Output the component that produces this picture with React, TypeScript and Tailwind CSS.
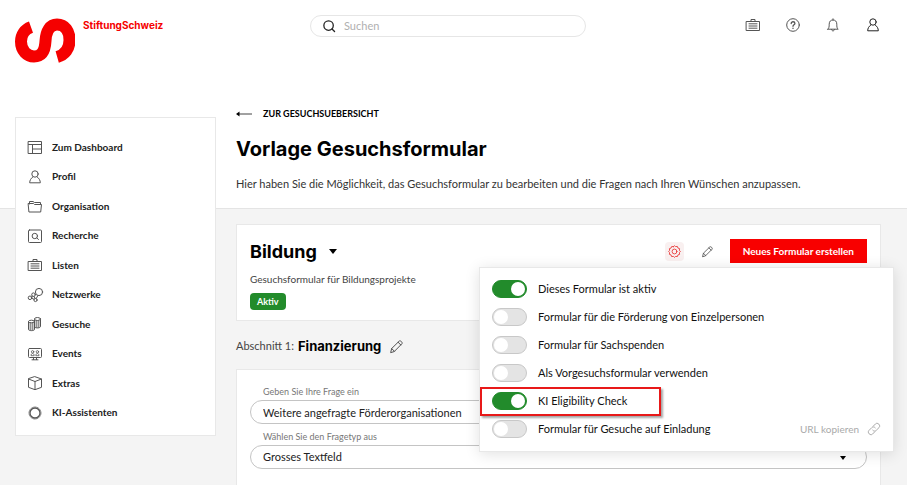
import {useState} from "react";
import type {ReactNode} from "react";

type SettingKey = "active" | "individuals" | "inKind" | "preliminary" | "eligibility" | "invitation";

const SETTINGS: {key: SettingKey; label: string}[] = [
    {key: "active", label: "Dieses Formular ist aktiv"},
    {key: "individuals", label: "Formular für die Förderung von Einzelpersonen"},
    {key: "inKind", label: "Formular für Sachspenden"},
    {key: "preliminary", label: "Als Vorgesuchsformular verwenden"},
    {key: "eligibility", label: "KI Eligibility Check"},
    {key: "invitation", label: "Formular für Gesuche auf Einladung"},
];

function Icon({children, className = "h-[14px] w-[14px]"}: {children: ReactNode; className?: string}) {
    return (
        <svg
            viewBox="0 0 14 14"
            fill="none"
            stroke="currentColor"
            strokeWidth="1"
            strokeLinecap="round"
            strokeLinejoin="round"
            className={`shrink-0 overflow-visible ${className}`}
            aria-hidden="true"
        >
            {children}
        </svg>
    );
}

const dashboardShape = <path d="M.5 1.500h13v12H.5zM.5 4.500h13M4.500 4.500v9M4.500 9h9"/>;
const personShape = (
    <>
        <circle cx="7" cy="4" r="3.200"/>
        <path d="M4.600 7.200C2.800 8.400 1.700 10.400 1.700 12.800h10.600c0-2.400-1.100-4.400-2.900-5.600"/>
    </>
);
const folderShape = <path d="M1.500 5V2.500h3.500l1.500 1h6v1.500M.5 4.500h5l1 1h7l-.8 7.500H1.300z"/>;
const searchBoxShape = (
    <>
        <rect x=".5" y="1" width="13" height="12.500" rx="1"/>
        <circle cx="6.800" cy="7" r="2.700"/>
        <path d="M8.900 9l1.600 1.500"/>
    </>
);
const listShape = <path d="M.5 3.500h13v9H.5zM5 3.500v-2h4v2M3 5.800h8M3 8h8M3 10.200h8"/>;
const networkShape = (
    <>
        <circle cx="11" cy="4" r="3.600"/>
        <circle cx="5.500" cy="6.700" r="1.800"/>
        <circle cx="2" cy="9.800" r="1.800"/>
        <circle cx="7.500" cy="12" r="1.600"/>
        <path d="M3.500 9l1-1M6 8.400l1 2M3.800 10.300l2.200 1M8.200 10.500L10 7.500"/>
    </>
);
const coinsShape = (
    <>
        <path d="M6.500 2v8c1.500 1.500 6 1 6-.5V2" fill="#ccc"/>
        <ellipse cx="9.500" cy="2" rx="3" ry="1.500" fill="#fff"/>
        <path d="M.5 4.500v8c0 1.500 6 1.500 6 0v-8" fill="#ccc"/>
        <ellipse cx="3.500" cy="4.500" rx="3" ry="1.300" fill="#fff"/>
        <path d="M2.500 6v7M4.500 6v7M8.500 4v6M10.500 4v6" strokeWidth=".5"/>
    </>
);
const eventsShape = (
    <>
        <rect x=".5" y="1.500" width="13" height="9" rx="1"/>
        <g strokeWidth=".8">
            <circle cx="4.600" cy="4.800" r="1.200"/>
            <circle cx="9.400" cy="4.800" r="1.200"/>
            <path d="M3 8.300c0-2.600 3.200-2.600 3.200 0zM7.800 8.300c0-2.600 3.200-2.600 3.200 0z"/>
        </g>
        <path d="M5.500 10.500v2M8.500 10.500v2M4 12.800h6"/>
    </>
);
const cubeShape = <path d="M7 .7l6.500 2.300v8.300L7 13.700.5 11.300V3zM.5 3L7 5.500 13.500 3M7 5.500v8"/>;
const ringShape = (
    <>
        <circle cx="7" cy="7" r="5" strokeWidth="1.300"/>
        <circle cx="7" cy="7" r="6" strokeWidth=".7" strokeDasharray="2 1"/>
    </>
);
const pencilShape = <path d="M.8 13.200l1-4L9.900 1.200c1.300-1.200 4.100 1.600 2.900 2.900L4.800 12.200zM1.800 9.200l3 3M8.700 2.400l2.900 2.900"/>;

const NAV = [
    {label: "Zum Dashboard", shape: dashboardShape},
    {label: "Profil", shape: personShape},
    {label: "Organisation", shape: folderShape},
    {label: "Recherche", shape: searchBoxShape},
    {label: "Listen", shape: listShape},
    {label: "Netzwerke", shape: networkShape},
    {label: "Gesuche", shape: coinsShape},
    {label: "Events", shape: eventsShape},
    {label: "Extras", shape: cubeShape},
    {label: "KI-Assistenten", shape: ringShape},
];

function Header() {
    return (
        <header className="flex h-26 items-start pl-[15px] pr-[27px] pt-[15px]">
            <a href="#" className="flex w-[295px] shrink-0 items-start gap-2 pt-[3px] text-[#f50000]">
                <svg viewBox="15 18 60 45" className="h-[45px] w-[60px]" aria-hidden="true">
                    <path
                        d="M31 27.200C24.500 29.500 21 35 21 41.500C21 50.500 27 56.500 34 56.500C42 56.500 45 50.500 45.500 41C46 31 50 24.500 57 24.500C65 24.500 69.500 31 69.500 40C69.500 49 65 54.800 57.200 57"
                        fill="none"
                        stroke="currentColor"
                        strokeWidth="12"
                    />
                </svg>
                <span className="font-['Inter','Liberation_Sans',sans-serif] text-[10px] font-bold leading-[14px]">StiftungSchweiz</span>
            </a>
            <label className="flex h-[22px] max-w-[276px] flex-1 items-center gap-[9px] rounded-full border border-[#e6e6e6] pl-3 pr-3">
                <Icon className="h-3 w-3 text-[#222]">
                    <circle cx="6.500" cy="6.500" r="5.500" strokeWidth="1.500"/>
                    <path d="M10.500 10.500l3 3" strokeWidth="1.500"/>
                </Icon>
                <input
                    type="search"
                    aria-label="Suchen"
                    placeholder="Suchen"
                    className="min-w-0 flex-1 bg-transparent text-[11px] leading-4 outline-none placeholder:text-[#b0b0b0]"
                />
            </label>
            <div className="ml-auto flex gap-[26px] pt-[3px] text-[#555]">
                <button type="button" aria-label="Listen"><Icon>{listShape}</Icon></button>
                <button type="button" aria-label="Hilfe">
                    <Icon>
                        <circle cx="7" cy="7" r="6.300"/>
                        <path d="M5.200 5.500c0-2.400 3.700-2.300 3.700-.1C8.900 6.800 7 6.900 7 8.300M7 10.200v.2" strokeWidth="1.300"/>
                    </Icon>
                </button>
                <button type="button" aria-label="Benachrichtigungen">
                    <Icon>
                        <path d="M1.800 11.200h10.400c-1.300-1-1.400-2.500-1.400-5C10.800 3.300 9.200 2 7 2S3.200 3.300 3.200 6.200c0 2.500-.1 4-1.400 5zM7 2V.8M5.500 11.500c.3 2 2.700 2 3 0"/>
                    </Icon>
                </button>
                <button type="button" aria-label="Profil" className="text-[#222]"><Icon>{personShape}</Icon></button>
            </div>
        </header>
    );
}

function Sidebar() {
    return (
        <nav className="mt-[13px] w-[201px] shrink-0 border border-[#e8e8e8] bg-white pb-2 pl-3 pt-[14px]">
            <ul>
                {NAV.map((item) => (
                    <li key={item.label} className="flex items-center odd:h-[30px] even:h-[29px]">
                        <a href="#" className="flex items-center gap-[10px] text-[10px] font-bold text-[#222]">
                            <span className="text-[#555]"><Icon>{item.shape}</Icon></span>
                            {item.label}
                        </a>
                    </li>
                ))}
            </ul>
        </nav>
    );
}

function SettingsMenu() {
    const [values, setValues] = useState<Record<SettingKey, boolean>>({
        active: true,
        individuals: false,
        inKind: false,
        preliminary: false,
        eligibility: true,
        invitation: false,
    });

    return (
        <div className="absolute -right-[14px] top-[42px] z-10 w-[415px] border border-[#e8e8e8] bg-white pb-2 pl-3 pr-3 pt-[7px] shadow-[0_2px_14px_rgba(0,0,0,0.12)]">
            {SETTINGS.map(({key, label}) => (
                <div key={key} className="relative flex h-7 items-center justify-between">
                    <label className="flex items-center gap-[11px] text-[11px] text-[#111]">
                        <input
                            type="checkbox"
                            role="switch"
                            checked={values[key]}
                            onChange={(e) => setValues({...values, [key]: e.target.checked})}
                            className="flex h-[18px] w-[35px] shrink-0 appearance-none items-center rounded-full border border-[#c8c8c8] bg-[#e4e4e4] px-px before:h-[14px] before:w-[14px] before:rounded-full before:bg-white checked:justify-end checked:border-[#228b2b] checked:bg-[#228b2b]"
                        />
                        {label}
                    </label>
                    {key === "eligibility" && (
                        <span className="pointer-events-none absolute -left-3 top-0 h-[29px] w-[181px] border-2 border-[#e81919] shadow-[2px_2px_2px_rgba(0,0,0,0.35)]"/>
                    )}
                    {key === "invitation" && (
                        <button type="button" className="flex items-center gap-2 text-[10px] text-[#aaa]">
                            URL kopieren
                            <Icon>
                                <path d="M6.200 4.200l2.300-2.300c2-2 5.600 1.400 3.600 3.600L9.200 8.400c-1 1-2.700.9-3.500-.2M7.800 9.800l-2.300 2.300c-2 2-5.600-1.400-3.600-3.600l2.900-2.900c1-1 2.700-.9 3.500.2"/>
                            </Icon>
                        </button>
                    )}
                </div>
            ))}
        </div>
    );
}

function FormCard() {
    return (
        <section className="relative mt-[30px] border border-[#e8e8e8] bg-white px-[13px] pb-[10px] pt-[14px]">
            <div className="flex h-6 items-center">
                <button type="button" className="flex items-center gap-3 font-['Inter','Liberation_Sans',sans-serif] text-[18px] font-bold text-black">
                    Bildung
                    <svg viewBox="0 0 8 5" className="h-[5px] w-2" aria-hidden="true"><path d="M0 0h8L4 5z"/></svg>
                </button>
                <div className="ml-auto flex items-center">
                    <button
                        type="button"
                        aria-label="Einstellungen"
                        className="mr-[18px] flex h-[19px] w-[19px] items-center justify-center rounded-sm bg-[#f9f0f0] text-[#e83030]"
                    >
                        <Icon className="h-[13px] w-[13px]">
                            <path d="M5.800 1.700Q7-.3 8.200 1.700Q10.800.600 10.700 3.300Q13.400 3.200 12.300 5.800Q14.300 7 12.300 8.200Q13.400 10.800 10.700 10.700Q10.800 13.400 8.200 12.300Q7 14.300 5.800 12.300Q3.200 13.400 3.300 10.700Q.6 10.800 1.700 8.200Q-.3 7 1.700 5.800Q.6 3.200 3.300 3.300Q3.200.6 5.800 1.700z" strokeWidth=".9"/>
                            <circle cx="7" cy="7" r="2.600" strokeWidth=".9"/>
                        </Icon>
                    </button>
                    <button type="button" aria-label="Formular bearbeiten" className="mr-[17px] text-[#444]">
                        <Icon className="h-[11px] w-[11px]">{pencilShape}</Icon>
                    </button>
                    <button type="button" className="h-6 bg-[#f80000] px-[13px] text-[10px] font-bold text-white">
                        Neues Formular erstellen
                    </button>
                </div>
            </div>
            <p className="mt-[6px] text-[10px] leading-5 text-[#444]">Gesuchsformular für Bildungsprojekte</p>
            <span className="mt-1 block w-fit rounded-sm bg-[#228b2b] px-[7px] text-[9px] font-bold leading-[17px] text-white">
                Aktiv
            </span>
            <SettingsMenu/>
        </section>
    );
}

function QuestionCard() {
    return (
        <section className="mt-[13px] flex-1 border border-b-0 border-[#e8e8e8] bg-white px-[13px] pt-[14px]">
            <label htmlFor="question" className="block pl-[13px] text-[9px] leading-4 text-[#777]">
                Geben Sie Ihre Frage ein
            </label>
            <input
                id="question"
                defaultValue="Weitere angefragte Förderorganisationen"
                className="block h-6 w-full rounded-full border border-[#c4c4c4] px-3 text-[11px] text-[#222]"
            />
            <label htmlFor="type" className="mt-[5px] block pl-[13px] text-[9px] leading-4 text-[#777]">
                Wählen Sie den Fragetyp aus
            </label>
            <div className="relative">
                <select
                    id="type"
                    className="block h-6 w-full appearance-none rounded-full border border-[#c4c4c4] px-3 text-[11px] text-[#222]"
                >
                    <option>Grosses Textfeld</option>
                </select>
                <svg viewBox="0 0 6 4" className="pointer-events-none absolute right-[21px] top-[11px] h-1 w-[6px]" aria-hidden="true">
                    <path d="M0 0h6L3 4z"/>
                </svg>
            </div>
        </section>
    );
}

export default function App() {
    return (
        <div className="flex min-h-screen flex-col bg-[linear-gradient(to_bottom,#fff_208px,#e4e4e4_208px,#e4e4e4_209px,#f4f4f4_209px)] font-['Lato','Liberation_Sans',sans-serif]">
            <Header/>
            <div className="flex flex-1 items-stretch gap-5 pl-[15px] pr-[26px]">
                <div><Sidebar/></div>
                <main className="flex min-w-0 flex-1 flex-col">
                    <a href="#" className="flex w-fit items-center gap-[11px] text-[9px] font-bold leading-5 text-black">
                        <svg viewBox="0 0 16 6" className="h-[6px] w-4" aria-hidden="true">
                            <path d="M2 3h14" stroke="#444" fill="none"/>
                            <path d="M0 3l3.500-2.500v5z"/>
                        </svg>
                        ZUR GESUCHSUEBERSICHT
                    </a>
                    <h1 className="mt-[11px] font-['Inter','Liberation_Sans',sans-serif] text-[20px] font-bold leading-7 text-black">
                        Vorlage Gesuchsformular
                    </h1>
                    <p className="mt-[11px] text-[11px] leading-5 text-[#333]">
                        Hier haben Sie die Möglichkeit, das Gesuchsformular zu bearbeiten und die Fragen nach Ihren Wünschen anzupassen.
                    </p>
                    <FormCard/>
                    <div className="mt-[15px] flex items-center leading-5">
                        <span className="text-[11px] text-[#444]">Abschnitt 1:</span>
                        <h2 className="ml-1 font-['Inter','Liberation_Sans',sans-serif] text-[13px] font-bold text-black">Finanzierung</h2>
                        <button type="button" aria-label="Abschnitt bearbeiten" className="ml-[9px] text-[#444]">
                            <Icon className="h-[13px] w-[13px]">{pencilShape}</Icon>
                        </button>
                    </div>
                    <QuestionCard/>
                </main>
            </div>
        </div>
    );
}
